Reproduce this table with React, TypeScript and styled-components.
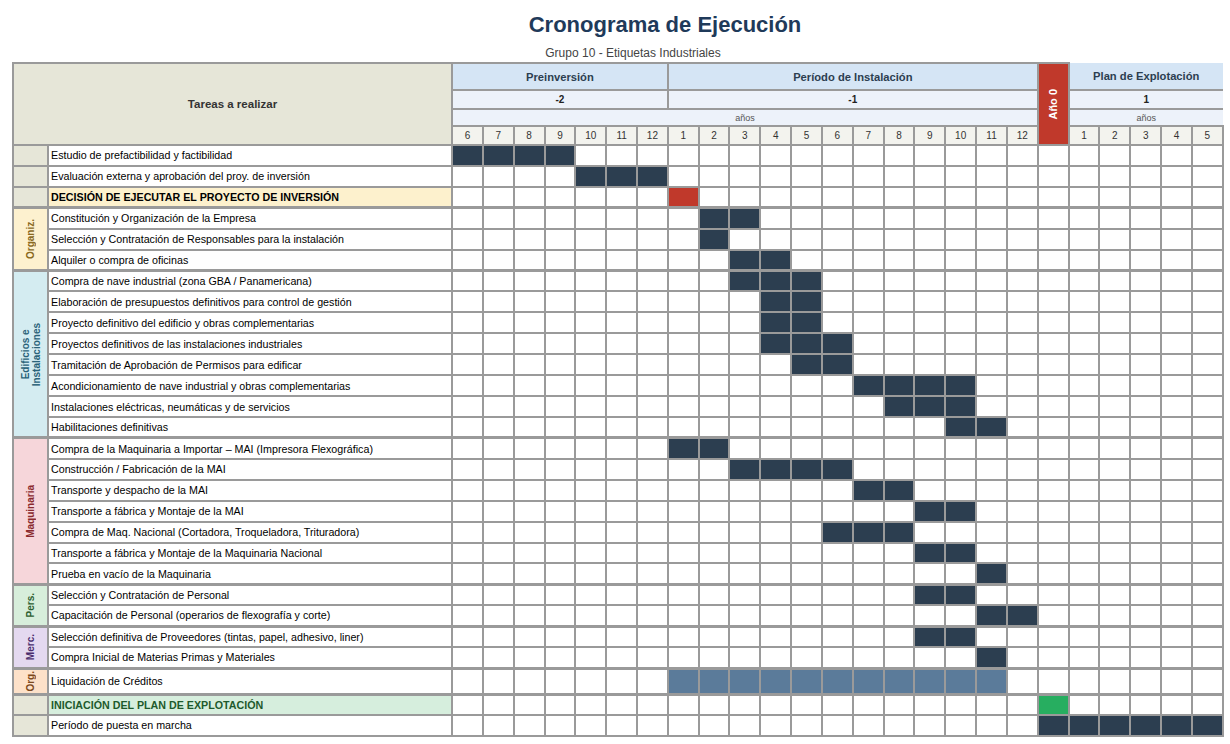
import React from 'react';
import styled, { createGlobalStyle, css } from 'styled-components';

const GlobalStyle = createGlobalStyle`
  html, body { margin: 0; padding: 0; background: #ffffff; }
  body { font-family: "Liberation Sans", Arial, sans-serif; color: #000; }
`;

type Fill = 'dark' | 'red' | 'blue' | 'green';
type Tone = 'neutral' | 'organiz' | 'edificios' | 'maquinaria' | 'pers' | 'merc' | 'org';
type Task = { label: string; spans: [number, number, Fill][]; variant?: 'decision' | 'start'; tall?: boolean };
type Group = { tone: Tone; name?: string[]; thick?: boolean; tasks: Task[] };

const tones: Record<Tone, { bg: string; fg: string }> = {
  neutral: { bg: '#e6e6d8', fg: '#333' },
  organiz: { bg: '#fdf1cf', fg: '#8a6a1f' },
  edificios: { bg: '#d4ecf1', fg: '#2b6379' },
  maquinaria: { bg: '#f6d6da', fg: '#8a2a2e' },
  pers: { bg: '#d7eedb', fg: '#2e5f31' },
  merc: { bg: '#e4d9f0', fg: '#4b2e6e' },
  org: { bg: '#fde1c9', fg: '#7d4a1e' },
};

const fills: Record<Fill, string> = {
  dark: '#2c3e50',
  red: '#c0392b',
  blue: '#5b7b9a',
  green: '#27ae60',
};

const groups: Group[] = [
  { tone: 'neutral', tasks: [{ label: 'Estudio de prefactibilidad y factibilidad', spans: [[0, 3, 'dark']] }] },
  { tone: 'neutral', tasks: [{ label: 'Evaluación externa y aprobación del proy. de inversión', spans: [[4, 6, 'dark']] }] },
  { tone: 'neutral', tasks: [{ label: 'DECISIÓN DE EJECUTAR EL PROYECTO DE INVERSIÓN', spans: [[7, 7, 'red']], variant: 'decision' }] },
  {
    tone: 'organiz', name: ['Organiz.'], thick: true, tasks: [
      { label: 'Constitución y Organización de la Empresa', spans: [[8, 9, 'dark']] },
      { label: 'Selección y Contratación de Responsables para la instalación', spans: [[8, 8, 'dark']] },
      { label: 'Alquiler o compra de oficinas', spans: [[9, 10, 'dark']] },
    ],
  },
  {
    tone: 'edificios', name: ['Edificios e', 'Instalaciones'], thick: true, tasks: [
      { label: 'Compra de nave industrial (zona GBA / Panamericana)', spans: [[9, 11, 'dark']] },
      { label: 'Elaboración de presupuestos definitivos para control de gestión', spans: [[10, 11, 'dark']] },
      { label: 'Proyecto definitivo del edificio y obras complementarias', spans: [[10, 11, 'dark']] },
      { label: 'Proyectos definitivos de las instalaciones industriales', spans: [[10, 12, 'dark']] },
      { label: 'Tramitación de Aprobación de Permisos para edificar', spans: [[11, 12, 'dark']] },
      { label: 'Acondicionamiento de nave industrial y obras complementarias', spans: [[13, 16, 'dark']] },
      { label: 'Instalaciones eléctricas, neumáticas y de servicios', spans: [[14, 16, 'dark']] },
      { label: 'Habilitaciones definitivas', spans: [[16, 17, 'dark']] },
    ],
  },
  {
    tone: 'maquinaria', name: ['Maquinaria'], thick: true, tasks: [
      { label: 'Compra de la Maquinaria a Importar – MAI (Impresora Flexográfica)', spans: [[7, 8, 'dark']] },
      { label: 'Construcción / Fabricación de la MAI', spans: [[9, 12, 'dark']] },
      { label: 'Transporte y despacho de la MAI', spans: [[13, 14, 'dark']] },
      { label: 'Transporte a fábrica y Montaje de la MAI', spans: [[15, 16, 'dark']] },
      { label: 'Compra de Maq. Nacional (Cortadora, Troqueladora, Trituradora)', spans: [[12, 14, 'dark']] },
      { label: 'Transporte a fábrica y Montaje de la Maquinaria Nacional', spans: [[15, 16, 'dark']] },
      { label: 'Prueba en vacío de la Maquinaria', spans: [[17, 17, 'dark']] },
    ],
  },
  {
    tone: 'pers', name: ['Pers.'], thick: true, tasks: [
      { label: 'Selección y Contratación de Personal', spans: [[15, 16, 'dark']] },
      { label: 'Capacitación de Personal (operarios de flexografía y corte)', spans: [[17, 18, 'dark']] },
    ],
  },
  {
    tone: 'merc', name: ['Merc.'], thick: true, tasks: [
      { label: 'Selección definitiva de Proveedores (tintas, papel, adhesivo, liner)', spans: [[15, 16, 'dark']] },
      { label: 'Compra Inicial de Materias Primas y Materiales', spans: [[17, 17, 'dark']] },
    ],
  },
  {
    tone: 'org', name: ['Org.'], thick: true, tasks: [
      { label: 'Liquidación de Créditos', spans: [[7, 17, 'blue']], tall: true },
    ],
  },
  { tone: 'neutral', thick: true, tasks: [{ label: 'INICIACIÓN DEL PLAN DE EXPLOTACIÓN', spans: [[19, 19, 'green']], variant: 'start' }] },
  { tone: 'neutral', tasks: [{ label: 'Período de puesta en marcha', spans: [[19, 24, 'dark']] }] },
];

const months = [6, 7, 8, 9, 10, 11, 12, 1, 2, 3, 4, 5, 6, 7, 8, 9, 10, 11, 12, 0, 1, 2, 3, 4, 5];

const fillAt = (spans: [number, number, Fill][], i: number): Fill | undefined => {
  const s = spans.find(([a, b]) => i >= a && i <= b);
  return s ? s[2] : undefined;
};

const Page = styled.div`
  width: 1230px;
  padding: 0 8px 0 12px;
  box-sizing: border-box;
`;

const Title = styled.h1`
  margin: 0;
  padding: 11px 0 0 96px;
  text-align: center;
  font-size: 22px;
  line-height: 28px;
  font-weight: bold;
  color: #1f3a5a;
`;

const Subtitle = styled.div`
  padding: 7px 0 0 32px;
  height: 23px;
  box-sizing: border-box;
  text-align: center;
  font-size: 12px;
  line-height: 14px;
  color: #444;
`;

const Table = styled.table`
  width: 1210px;
  border-collapse: collapse;
  table-layout: fixed;
`;

const Col = styled.col<{ $w: number }>`
  width: ${(p) => p.$w}px;
`;

const HeadRow = styled.tr<{ $h: number }>`
  height: ${(p) => p.$h}px;
`;

const BodyRow = styled.tr<{ $tall?: boolean }>`
  height: ${(p) => (p.$tall ? 26 : 20.93)}px;
`;

const cellBase = css`
  border: 2px solid #9a9a9a;
  padding: 0;
  box-sizing: border-box;
`;

const TareasHead = styled.th`
  ${cellBase};
  background: #e6e6d8;
  font-size: 11.5px;
  font-weight: bold;
  color: #333;
  text-align: center;
`;

const PhaseHead = styled.th<{ $open?: boolean }>`
  ${cellBase};
  background: #d5e5f5;
  color: #2c3e50;
  font-size: 11.2px;
  font-weight: bold;
  text-align: center;
  ${(p) => p.$open && css`border-top-style: hidden; border-right-style: hidden;`}
`;

const YearHead = styled.th<{ $open?: boolean }>`
  ${cellBase};
  background: #edf2fa;
  color: #222;
  font-size: 10px;
  font-weight: bold;
  text-align: center;
  ${(p) => p.$open && css`border-right-style: hidden;`}
`;

const UnitHead = styled.th<{ $open?: boolean }>`
  ${cellBase};
  background: #edf2fa;
  color: #555;
  font-size: 9px;
  font-weight: normal;
  text-align: center;
  ${(p) => p.$open && css`border-right-style: hidden;`}
`;

const MonthHead = styled.th`
  ${cellBase};
  background: #f3f3ee;
  color: #333;
  font-size: 10px;
  font-weight: normal;
  text-align: center;
`;

const YearZeroHead = styled.th`
  ${cellBase};
  background: #c0392b;
  color: #ffffff;
  text-align: center;
  vertical-align: middle;
`;

const Vertical = styled.div`
  writing-mode: vertical-rl;
  transform: rotate(180deg);
  margin: 0 auto;
  white-space: nowrap;
`;

const YearZeroLabel = styled(Vertical)`
  font-size: 11px;
  font-weight: bold;
  line-height: 12px;
`;

const CategoryCell = styled.td<{ $tone: Tone; $thick?: boolean }>`
  ${cellBase};
  background: ${(p) => tones[p.$tone].bg};
  color: ${(p) => tones[p.$tone].fg};
  text-align: center;
  vertical-align: middle;
  ${(p) => p.$thick && css`border-top-width: 3px;`}
`;

const CategoryLabel = styled(Vertical)`
  font-size: 10px;
  font-weight: bold;
  line-height: 11px;
  text-align: center;
`;

const TaskCell = styled.td<{ $variant?: 'decision' | 'start'; $thick?: boolean }>`
  ${cellBase};
  padding-left: 2px;
  font-size: 10.7px;
  white-space: nowrap;
  overflow: hidden;
  background: #fff;
  color: #000;
  ${(p) => p.$variant === 'decision' && css`background: #fdf1cd; font-weight: bold;`}
  ${(p) => p.$variant === 'start' && css`background: #d6eedd; font-weight: bold; color: #1e5a2c;`}
  ${(p) => p.$thick && css`border-top-width: 3px;`}
`;

const GridCell = styled.td<{ $fill?: Fill; $thick?: boolean }>`
  ${cellBase};
  background: ${(p) => (p.$fill ? fills[p.$fill] : '#ffffff')};
  ${(p) => p.$thick && css`border-top-width: 3px;`}
`;

export default function App() {
  return (
    <>
      <GlobalStyle />
      <Page>
        <Title>Cronograma de Ejecución</Title>
        <Subtitle>Grupo 10 - Etiquetas Industriales</Subtitle>
        <Table>
          <colgroup>
            <Col $w={35} />
            <Col $w={404} />
            {months.map((_, i) => (
              <Col key={i} $w={30.84} />
            ))}
          </colgroup>
          <thead>
            <HeadRow $h={27}>
              <TareasHead colSpan={2} rowSpan={4}>Tareas a realizar</TareasHead>
              <PhaseHead colSpan={7}>Preinversión</PhaseHead>
              <PhaseHead colSpan={12}>Período de Instalación</PhaseHead>
              <YearZeroHead rowSpan={4}>
                <YearZeroLabel>Año 0</YearZeroLabel>
              </YearZeroHead>
              <PhaseHead colSpan={5} $open>Plan de Explotación</PhaseHead>
            </HeadRow>
            <HeadRow $h={19}>
              <YearHead colSpan={7}>-2</YearHead>
              <YearHead colSpan={12}>-1</YearHead>
              <YearHead colSpan={5} $open>1</YearHead>
            </HeadRow>
            <HeadRow $h={17}>
              <UnitHead colSpan={19}>años</UnitHead>
              <UnitHead colSpan={5} $open>años</UnitHead>
            </HeadRow>
            <HeadRow $h={19}>
              {months.map((m, i) => (i === 19 ? null : <MonthHead key={i}>{m}</MonthHead>))}
            </HeadRow>
          </thead>
          <tbody>
            {groups.map((g, gi) =>
              g.tasks.map((t, ti) => {
                const thick = g.thick && ti === 0;
                return (
                  <BodyRow key={`${gi}-${ti}`} $tall={t.tall}>
                    {ti === 0 && (
                      <CategoryCell rowSpan={g.tasks.length} $tone={g.tone} $thick={thick}>
                        {g.name && (
                          <CategoryLabel>
                            {g.name.map((n, ni) => (
                              <div key={ni}>{n}</div>
                            ))}
                          </CategoryLabel>
                        )}
                      </CategoryCell>
                    )}
                    <TaskCell $variant={t.variant} $thick={thick}>{t.label}</TaskCell>
                    {months.map((_, i) => (
                      <GridCell key={i} $fill={fillAt(t.spans, i)} $thick={thick} />
                    ))}
                  </BodyRow>
                );
              })
            )}
          </tbody>
        </Table>
      </Page>
    </>
  );
}
